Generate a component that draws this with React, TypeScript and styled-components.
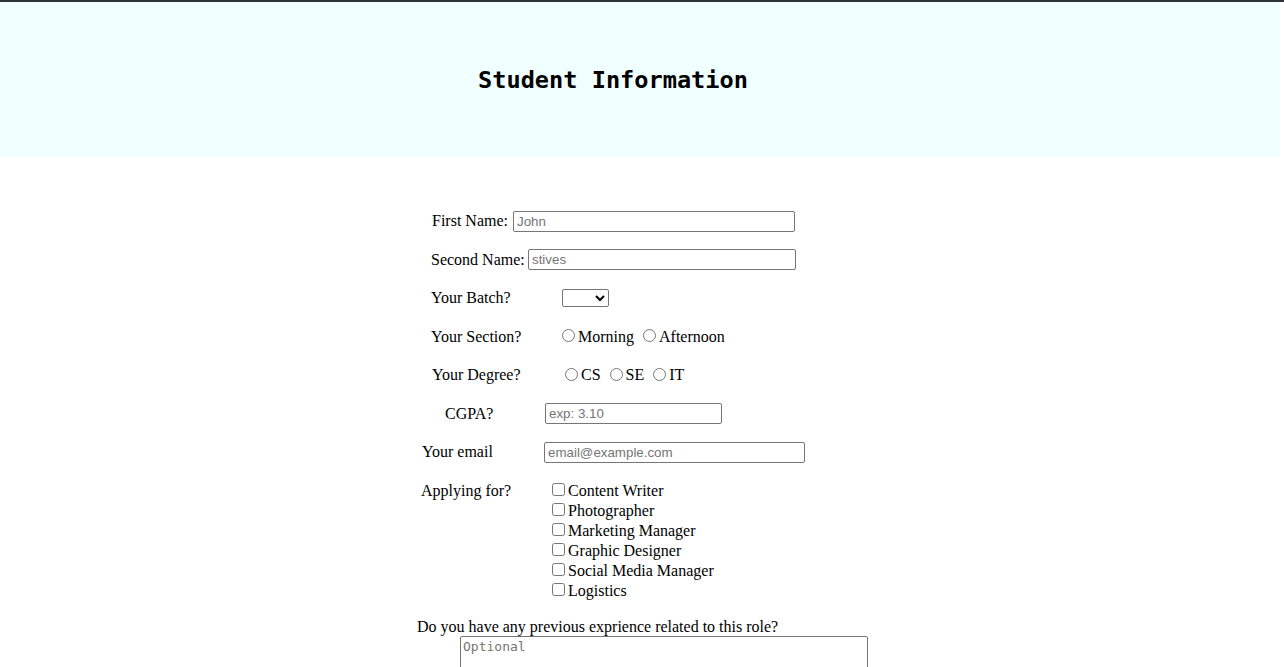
import React from 'react';
import styled, { createGlobalStyle } from 'styled-components';

const GlobalStyle = createGlobalStyle`
  body {
    margin: 0;
    border-top: 2px solid #2e323b;
    background: #fff;
    font-family: 'Liberation Serif', 'Times New Roman', serif;
    font-size: 16px;
    color: #000;
  }
`;

const Header = styled.header`
  height: 155px;
  margin-right: 4px;
  background: #f0ffff;
  display: flex;
  align-items: center;
  justify-content: center;
  padding-right: 54px;
  h1 {
    margin: 0;
    font-family: 'DejaVu Sans Mono', 'Liberation Mono', monospace;
    font-size: 23.6px;
    font-weight: bold;
  }
`;

const Form = styled.form`
  display: flex;
  flex-direction: column;
  padding-top: 45px;
`;

const Row = styled.div<{ $indent: number; $top?: boolean }>`
  display: flex;
  align-items: ${(p) => (p.$top ? 'flex-start' : 'center')};
  height: ${(p) => (p.$top ? 'auto' : '38.5px')};
  padding-left: ${(p) => p.$indent}px;
  padding-top: ${(p) => (p.$top ? '9.5px' : '0')};
  line-height: 20px;
`;

const Label = styled.label<{ $width: number }>`
  width: ${(p) => p.$width}px;
  flex-shrink: 0;
  white-space: nowrap;
`;

const TextInput = styled.input<{ $width: number }>`
  box-sizing: border-box;
  width: ${(p) => p.$width}px;
  height: 21px;
  padding: 1px 3px;
  border: 1px solid #767676;
  border-radius: 2px;
  font-family: 'Liberation Sans', Arial, sans-serif;
  font-size: 13.33px;
  &::placeholder {
    color: #757575;
  }
`;

const Select = styled.select`
  box-sizing: border-box;
  width: 47px;
  height: 18px;
  font-family: 'Liberation Sans', Arial, sans-serif;
  font-size: 13.33px;
  border: 1px solid #767676;
  border-radius: 2px;
  background: #fff;
`;

const Choices = styled.div`
  display: flex;
  align-items: center;
  gap: 4px;
`;

const Choice = styled.label`
  display: inline-flex;
  align-items: center;
  input {
    width: 13px;
    height: 13px;
    margin: -2px 3px 0 5px;
  }
`;

const CheckList = styled.div`
  display: flex;
  flex-direction: column;
  label {
    display: flex;
    align-items: center;
    height: 20px;
  }
  input {
    width: 13px;
    height: 13px;
    margin: -3px 3px 0 5px;
  }
`;

const Question = styled.div`
  padding-left: 417px;
  margin-top: 16px;
  line-height: 20px;
`;

const TextArea = styled.textarea`
  box-sizing: border-box;
  display: block;
  margin-left: 460px;
  margin-top: -1px;
  width: 408px;
  height: 50px;
  padding: 2px;
  border: 1px solid #767676;
  border-radius: 2px;
  font-family: 'DejaVu Sans Mono', 'Liberation Mono', monospace;
  font-size: 13px;
  resize: none;
  &::placeholder {
    color: #757575;
  }
`;

const roles = [
  'Content Writer',
  'Photographer',
  'Marketing Manager',
  'Graphic Designer',
  'Social Media Manager',
  'Logistics',
];

export default function App() {
  return (
    <>
      <GlobalStyle />
      <Header>
        <h1>Student Information</h1>
      </Header>
      <Form>
        <Row $indent={432}>
          <Label $width={81}>First Name:</Label>
          <TextInput $width={282} placeholder="John" />
        </Row>
        <Row $indent={431}>
          <Label $width={97}>Second Name:</Label>
          <TextInput $width={268} placeholder="stives" />
        </Row>
        <Row $indent={431}>
          <Label $width={131}>Your Batch?</Label>
          <Select />
        </Row>
        <Row $indent={431}>
          <Label $width={126}>Your Section?</Label>
          <Choices>
            <Choice>
              <input type="radio" name="section" />
              Morning
            </Choice>
            <Choice>
              <input type="radio" name="section" />
              Afternoon
            </Choice>
          </Choices>
        </Row>
        <Row $indent={432}>
          <Label $width={128}>Your Degree?</Label>
          <Choices>
            <Choice>
              <input type="radio" name="degree" />
              CS
            </Choice>
            <Choice>
              <input type="radio" name="degree" />
              SE
            </Choice>
            <Choice>
              <input type="radio" name="degree" />
              IT
            </Choice>
          </Choices>
        </Row>
        <Row $indent={445}>
          <Label $width={100}>CGPA?</Label>
          <TextInput $width={177} placeholder="exp: 3.10" />
        </Row>
        <Row $indent={422}>
          <Label $width={122}>Your email</Label>
          <TextInput $width={261} placeholder="email@example.com" />
        </Row>
        <Row $indent={421} $top>
          <Label $width={126}>Applying for?</Label>
          <CheckList>
            {roles.map((r) => (
              <label key={r}>
                <input type="checkbox" />
                {r}
              </label>
            ))}
          </CheckList>
        </Row>
        <Question>Do you have any previous exprience related to this role?</Question>
        <TextArea placeholder="Optional" />
      </Form>
    </>
  );
}
